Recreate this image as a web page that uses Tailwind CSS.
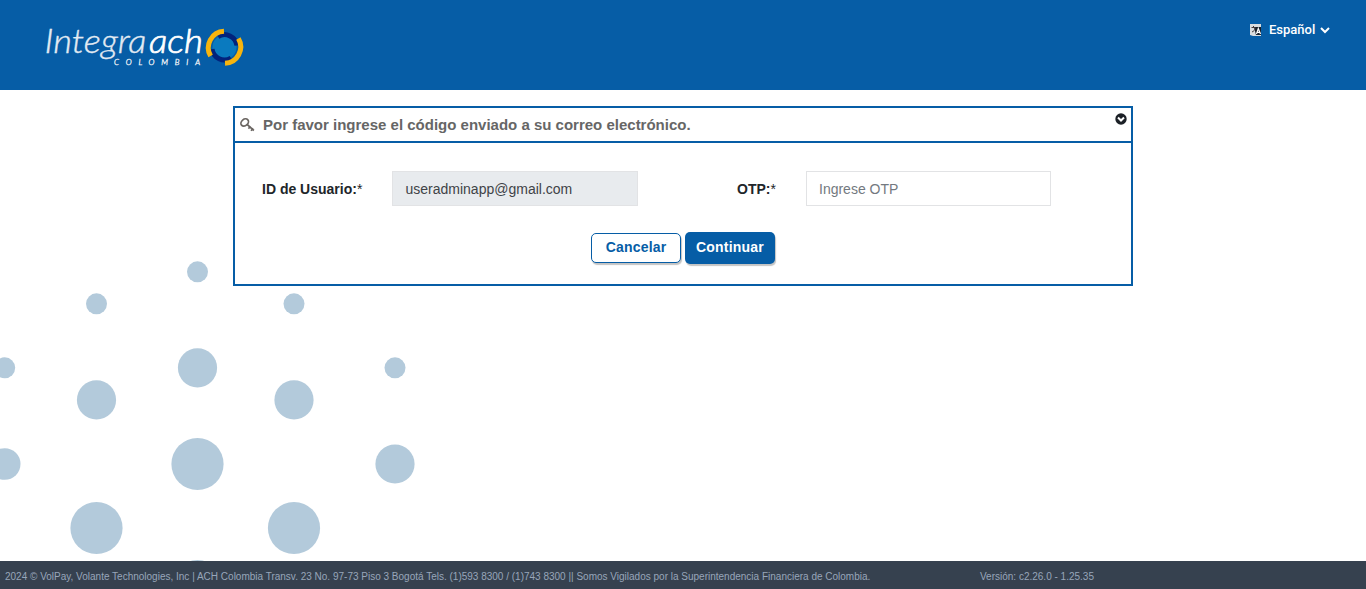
<!DOCTYPE html>
<html lang="es">
<head>
<meta charset="utf-8">
<title>Integra ACH Colombia</title>
<script src="https://cdn.jsdelivr.net/npm/@tailwindcss/browser@4"></script>
</head>
<body class="relative flex h-[589px] flex-col overflow-hidden bg-white font-['Liberation_Sans',Arial,sans-serif] text-sm text-[#212529]">
  <svg class="absolute left-0 top-[250px] -z-10" width="430" height="339" viewBox="0 250 430 339" fill="#b3cadb" aria-hidden="true">
    <circle cx="197.5" cy="271.8" r="10.5"/><circle cx="96.5" cy="303.8" r="10.5"/><circle cx="294" cy="303.8" r="10.5"/>
    <circle cx="4.7" cy="367.8" r="10.5"/><circle cx="395" cy="367.8" r="10.5"/>
    <circle cx="197.5" cy="367.8" r="19.6"/><circle cx="96.5" cy="399.9" r="19.6"/><circle cx="294" cy="399.9" r="19.6"/>
    <circle cx="4.7" cy="464" r="15.8"/><circle cx="395" cy="464" r="19.6"/>
    <circle cx="197.5" cy="464" r="26.1"/><circle cx="96.5" cy="528" r="26.1"/><circle cx="294" cy="528" r="26.1"/>
    <circle cx="197.5" cy="586" r="26.1"/>
  </svg>

  <header class="flex h-[90px] shrink-0 items-start justify-between bg-[#065da6] pl-10 pr-9">
    <svg class="mt-5" width="210" height="55" viewBox="40 20 210 55" role="img">
      <g fill="#e3ebf3" font-family="Lato, sans-serif" font-style="italic" font-weight="300">
        <text x="44.5" y="52.5" font-size="32.5" stroke="#e3ebf3" stroke-width=".35" textLength="102" lengthAdjust="spacingAndGlyphs">Integra</text>
        <text x="149" y="52.5" font-size="32.5" fill="#fff" stroke="#fff" stroke-width=".7" textLength="54" lengthAdjust="spacingAndGlyphs">ach</text>
        <text x="114" y="65" font-size="8" stroke="#e3ebf3" stroke-width=".4" textLength="86" lengthAdjust="spacing" letter-spacing="0">COLOMBIA</text>
      </g>
      <circle cx="224.5" cy="47.3" r="12" fill="#0a7abf"/>
      <g fill="none">
        <path d="M218 36.5A12.6 12.6 0 0 1 237 45.5" stroke="#02237c" stroke-width="5"/>
        <path d="M231 58.1A12.6 12.6 0 0 1 212 49.1" stroke="#02237c" stroke-width="5"/>
        <path d="M224 31.3A16.4 16.4 0 0 0 210.6 56" stroke="#f7b40d" stroke-width="5"/>
        <path d="M225 63.3A16.4 16.4 0 0 0 238.4 38.6" stroke="#f7b40d" stroke-width="5"/>
      </g>
    </svg>
    <div class="mt-5 flex h-5 items-center text-white">
      <svg width="12" height="13" viewBox="0 0 12 13" aria-hidden="true">
        <path fill="#d9dde0" d="M0 0h11v12H3L0 11z"/>
        <path fill="#17202b" d="M4 3h7v8H6z"/>
        <path fill="none" stroke="#443a3a" d="M1.5 3.5h4M3.5 2v2M2 8c2-1 3-2 3-4"/>
        <path fill="none" stroke="#fff" stroke-width="1.2" d="m6.5 10 1.8-5.5L10.5 10M7.1 8.3h2.8"/>
      </svg>
      <span class="ml-[7px] w-[47px] whitespace-nowrap font-[Roboto,sans-serif] text-[13px] font-medium">Español</span>
      <svg class="ml-1" width="10" height="7" viewBox="0 0 10 7" fill="none" stroke="#fff" stroke-width="2" aria-hidden="true"><path d="m1 1 4 4 4-4"/></svg>
    </div>
  </header>

  <main class="flex grow justify-center pt-4">
    <section class="h-[180px] w-[900px] border-2 border-[#065da6] bg-white">
      <div class="flex h-[35px] items-start justify-between border-b-2 border-[#065da6] pl-[5px] pr-1">
        <div class="flex h-[33px] items-center">
          <svg width="15" height="14" viewBox="0 0 15 14" fill="none" stroke="#6b6662" aria-hidden="true">
            <ellipse cx="4.7" cy="4.5" rx="4.1" ry="3.2" transform="rotate(-40 4.7 4.5)" stroke-width="1.7"/>
            <path d="m7 6.3 6.9 6.2M8.4 10.6l2.2-2.4M11 12.8l2.2-2.4" stroke-width="1.7"/>
          </svg>
          <h1 class="ml-2 whitespace-nowrap text-[15px] font-bold text-[#666]">Por favor ingrese el código enviado a su correo electrónico.</h1>
        </div>
        <svg class="mt-[5px]" width="12" height="12" viewBox="0 0 12 12" aria-hidden="true"><circle cx="6" cy="6" r="5.7" fill="#1b2026"/><path d="m3 4.5 3 3 3-3" fill="none" stroke="#fff" stroke-width="2"/></svg>
      </div>
      <form class="flex flex-col">
        <div class="mt-7 flex h-[35px] items-center pl-[27px]">
          <label class="w-[130px]"><b>ID de Usuario:</b>*</label>
          <div class="flex h-[35px] w-[246px] items-center border border-[#e2e3e5] bg-[#e8ebee] pl-[12.5px] text-[#404347]"><span>useradminapp@gmail.com</span></div>
          <label class="ml-[99px] w-[69px]"><b>OTP:</b>*</label>
          <div class="flex h-[35px] w-[245px] items-center border border-[#e2e3e5] bg-white pl-3 text-[#737980]"><span>Ingrese OTP</span></div>
        </div>
        <div class="mt-[26px] flex items-start justify-center gap-1">
          <button type="button" class="mt-px h-[30px] w-[90px] rounded-[5px] border border-[#065da6] bg-white pb-[2px] text-sm font-bold tracking-[0.2px] text-[#065da6] shadow-[1px_2px_1px_#c4c4c4]">Cancelar</button>
          <button type="button" class="h-8 w-[90px] rounded-[5px] bg-[#065da6] pb-[2px] text-sm font-bold tracking-[0.2px] text-white shadow-[1px_2px_1px_#c4c4c4]">Continuar</button>
        </div>
      </form>
    </section>
  </main>

  <footer class="flex h-7 shrink-0 items-center bg-[#36414f] pl-[5px] pt-1 text-[10px] text-[#98a6ba]">
    <p class="w-[975px] whitespace-nowrap">2024 © VolPay, Volante Technologies, Inc | ACH Colombia Transv. 23 No. 97-73 Piso 3 Bogotá Tels. (1)593 8300 / (1)743 8300 || Somos Vigilados por la Superintendencia Financiera de Colombia.</p>
    <p class="whitespace-nowrap">Versión: c2.26.0 - 1.25.35</p>
  </footer>
</body>
</html>
